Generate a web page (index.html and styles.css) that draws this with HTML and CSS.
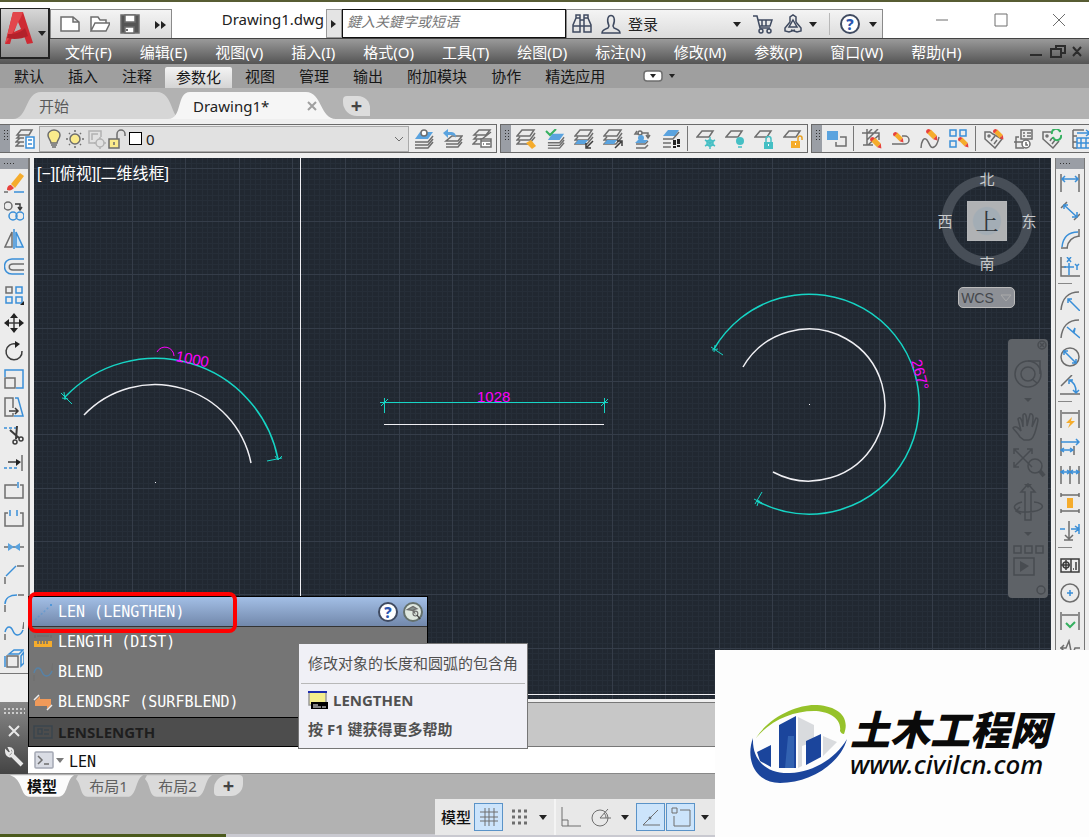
FILE: index.html
```html
<!DOCTYPE html>
<html lang="zh-CN">

<head>
    <title>Drawing1.dwg</title>
    <meta charset="utf-8">
    <link rel="stylesheet" href="styles.css">
</head>

<body>
    <!-- icon set, all on a 20x20 box -->
    <svg class="icon_defs" width="0" height="0">
        <symbol id="sheets" viewBox="0 0 20 20">
            <path d="M6 1h12l-4 6H1z M4 8l-3 3h13l5-7 M4 12l-3 3h12l6-7" />
        </symbol>
        <symbol id="stack" viewBox="0 0 20 20">
            <path class="fb" d="M6 3h13l-5 7H1z" />
            <path d="M1 13h13l5-6 M1 16h13l5-6 M1 19h13l5-6" />
        </symbol>
        <symbol id="sheet" viewBox="0 0 20 20">
            <path d="M6 2h11l-4 6H1z" />
        </symbol>
        <symbol id="pencil" viewBox="0 0 20 20">
            <path class="fy" d="M2 7l6-6 10 10-6 6z" />
            <path class="fr" d="M0 5c0-3 2-5 5-5l3 2-6 6z" />
            <path class="fr" d="M12 17l6-6 1 8z" />
        </symbol>
        <symbol id="layerprops" viewBox="0 0 20 20">
            <path d="M6 1h11l-3 5H2z M9 9H2l3-3 M9 13H1l4-4 M9 17H1l4-4" />
            <path class="w b" d="M11 8h8v11h-8z" />
            <path class="b" d="M13 11h4M13 15h4" />
        </symbol>
        <symbol id="bulb" viewBox="0 0 20 20">
            <path class="ly" d="M7 14c0-3-3-4-3-8a6 5 0 0 1 12 0c0 4-3 5-3 8z" />
            <path d="M7 16h6M8 18h4" />
        </symbol>
        <symbol id="sun" viewBox="0 0 20 20">
            <circle class="ly" cx="10" cy="10" r="5" />
            <path d="M10 1v2M10 17v2M1 10h2M17 10h2M4 4l1 1M15 15l1 1M16 4l-1 1M5 15l-1 1" />
        </symbol>
        <symbol id="vpfreeze" viewBox="0 0 20 20">
            <g class="faint">
                <path d="M9 14H3V2h12v6 M6 11V5h6" />
                <circle cx="14" cy="14" r="4" />
                <path d="M14 8v2M14 18v2M8 14h2M18 14h2" />
            </g>
        </symbol>
        <symbol id="unlock" viewBox="0 0 20 20">
            <path class="ly" d="M2 10h10v9H2z" />
            <path d="M10 10V5a4 4 0 0 1 8 0v2 M7 13v3" />
        </symbol>
        <symbol id="layercur" viewBox="0 0 20 20">
            <use href="#stack" />
            <circle class="w" cx="10" cy="4" r="3" />
        </symbol>
        <symbol id="layerprev" viewBox="0 0 20 20">
            <path d="M9 7h10l-4 5H3z M3 15h12l4-5 M3 18h12l4-5" />
            <path class="fb" d="M0 4l5-4v3c5 0 8 0 8 6-1-3-3-3-8-3v3z" />
        </symbol>
        <symbol id="layerstate" viewBox="0 0 20 20">
            <path d="M7 1h11l-4 5H2z M5 7l-3 3h8l9-7 M5 11l-4 4h7" />
            <path class="w" d="M9 10h10v8H9z" />
            <path d="M9 12h10M11 15h1M14 15h4" />
        </symbol>
        <symbol id="layermatch" viewBox="0 0 20 20">
            <use href="#sheets" />
            <path class="fy" d="M10 14l5-3 5 6-4 3z" />
        </symbol>
        <symbol id="layercheck" viewBox="0 0 20 20">
            <g transform="translate(2 2)"><use href="#stack" width="18" height="18" /></g>
            <path class="gr" d="M1 2l4 4 6-6" />
        </symbol>
        <symbol id="layeriso" viewBox="0 0 20 20">
            <use href="#sheets" />
            <path class="fb" d="M4 11h10l-3 4H1z" />
            <path class="dk" d="M19 12l-6 6M12 14v5h5" />
        </symbol>
        <symbol id="layeruniso" viewBox="0 0 20 20">
            <use href="#sheets" />
            <path class="fb" d="M4 11h10l-3 4H1z" />
            <path class="dk" d="M12 19l6-6M14 12h5v5" />
        </symbol>
        <symbol id="layermove" viewBox="0 0 20 20">
            <circle cx="8" cy="4" r="2" />
            <path d="M5 2L3 5h4M10 4h6v4M14 6l2 3 2-3M4 15h9l3-3M4 19h9l3-3" />
            <path class="fb" d="M3 14l3-3h10l-3 3z" />
            <circle class="fb" cx="9" cy="9" r="3" />
        </symbol>
        <symbol id="layerwalk" viewBox="0 0 20 20">
            <path class="fb" d="M7 1h11l-4 6H2z" />
            <path d="M2 10h10l6-7M2 14h8M2 18h8" />
            <path class="fk" d="M12 11h3v5h-3zM16 10h3v5h-3zM12 17h3v2h-3zM16 16h3v2h-3z" />
        </symbol>
        <symbol id="layfrz" viewBox="0 0 20 20">
            <use href="#sheet" />
            <path class="t" d="M14 8v12M9 11l10 6M19 11L9 17" />
            <circle class="t" cx="14" cy="14" r="3" />
        </symbol>
        <symbol id="layoff" viewBox="0 0 20 20">
            <use href="#sheet" />
            <circle class="ft" cx="15" cy="12" r="4" />
            <path class="t" d="M13 18h4" />
        </symbol>
        <symbol id="laylock" viewBox="0 0 20 20">
            <use href="#sheet" />
            <path class="ft" d="M10 13h9v7h-9z" />
            <path class="t" d="M12 13v-3a2 2 0 0 1 5 0v3" />
            <path class="fw" d="M14 15h1v2h-1z" />
        </symbol>
        <symbol id="layunlock" viewBox="0 0 20 20">
            <use href="#sheet" />
            <path class="fy" d="M8 12h9v7H8z" />
            <path class="y" d="M15 12V9a2 2 0 0 1 4 0v2" />
            <path class="fw" d="M12 14h1v2h-1z" />
        </symbol>
        <symbol id="draworder" viewBox="0 0 20 20">
            <path class="fb" d="M0 2h11v9H0z" />
            <path d="M13 8h6v9H9v-4" />
        </symbol>
        <symbol id="edithatch" viewBox="0 0 20 20">
            <path d="M5 0v16H1M0 4h17v7M1 16h10M16 0L5 11M17 6L6 16M10 0L5 5" />
            <g transform="translate(8 8)"><use href="#pencil" width="12" height="12" /></g>
        </symbol>
        <symbol id="editpline" viewBox="0 0 20 20">
            <path d="M1 15h13a4 4 0 0 0 0-8h-3" />
            <g transform="translate(2 3)"><use href="#pencil" width="11" height="11" /></g>
        </symbol>
        <symbol id="editspline" viewBox="0 0 20 20">
            <path d="M1 19c0-6 3-12 6-8s3 9 7 7 4-7 5-10" />
            <g transform="translate(6 0)"><use href="#pencil" width="12" height="12" /></g>
        </symbol>
        <symbol id="editarray" viewBox="0 0 20 20">
            <path class="b" d="M1 1h6v6H1zM11 1h6v6h-6zM1 12h6v6H1zM11 12h4" />
            <g transform="translate(9 8)"><use href="#pencil" width="11" height="11" /></g>
        </symbol>
        <symbol id="editattr" viewBox="0 0 20 20">
            <path d="M1 3h5l3 2 9 5-7 9L1 10z" />
            <circle cx="5" cy="7" r="1" />
            <path d="M7 12l4-5M10 15l3-4" />
            <g transform="translate(9 0)"><use href="#pencil" width="11" height="11" /></g>
        </symbol>
        <symbol id="battman" viewBox="0 0 20 20">
            <path d="M8 1h11v9H8zM10 4h2M14 4h4M10 7h2M14 7h4M6 8H3v11h8M1 13h10" />
            <circle class="w" cx="13" cy="15" r="4" />
            <path d="M13 13v3h2" />
        </symbol>
        <symbol id="attsync" viewBox="0 0 20 20">
            <path d="M9 3H1v7l10 9 6-7" />
            <circle cx="5" cy="7" r="1" />
            <path d="M8 12l2-3M10 15l3-4" />
            <path class="gr" d="M10 5a4 4 0 0 1 8-2V1M19 6a4 4 0 0 1-8 2v2" />
        </symbol>
        <symbol id="dataext" viewBox="0 0 20 20">
            <path d="M2 1h11M2 1v18M2 7h4M2 13h4M2 19h4" />
            <path class="b" d="M6 4h12M15 1l4 3-4 3M6 9h13v10H6zM6 14h13M10 9v10M15 9v10" />
        </symbol>

        <!-- modify toolbar -->
        <symbol id="erase" viewBox="0 0 20 20">
            <path class="fy" d="M7 11l9-11 4 3-9 12z" />
            <path class="fr" d="M3 17c0-4 2-5 4-5l3 3c-2 2-4 3-7 2z" />
            <path d="M0 19h4" />
            <path class="b" d="M10 19h10" />
        </symbol>
        <symbol id="copy" viewBox="0 0 20 20">
            <circle cx="4" cy="5" r="4" />
            <circle class="b" cx="9" cy="15" r="4" />
            <circle class="b" cx="16" cy="15" r="4" />
            <path class="dk" d="M11 3h5v5M14 6l2 3 2-3" />
        </symbol>
        <symbol id="mirror" viewBox="0 0 20 20">
            <path d="M8 3v15H1z" />
            <path class="lb" d="M12 3v15h7z" />
            <path class="b" d="M10 0v20" />
        </symbol>
        <symbol id="offset" viewBox="0 0 20 20">
            <path class="b" d="M20 2H8C-2 2-2 17 8 17h12" />
            <path d="M20 7H9c-5 0-5 6 0 6h11" />
        </symbol>
        <symbol id="array" viewBox="0 0 20 20">
            <path d="M2 2h6v6H2z" />
            <path class="b" d="M12 2h6v6h-6zM2 12h6v6H2zM12 12h6v6h-6z" />
            <path class="fk" d="M20 16v4h-4z" />
        </symbol>
        <symbol id="move" viewBox="0 0 20 20">
            <path class="dk" d="M10 3v14M3 10h14" />
            <path class="fk" d="M10 0l4 5H6zM10 20l-4-5h8zM0 10l5-4v8zM20 10l-5-4v8z" />
        </symbol>
        <symbol id="rotate" viewBox="0 0 20 20">
            <path class="dk" d="M12 3a8 8 0 1 0 6 7" />
            <path class="fk" d="M11 0l5 3-5 4z" />
        </symbol>
        <symbol id="scale" viewBox="0 0 20 20">
            <path class="b" d="M1 8V1h18v18h-7" />
            <path d="M1 9h10v10H1z" />
        </symbol>
        <symbol id="stretch" viewBox="0 0 20 20">
            <path d="M9 11V1H1v18h8v-3" />
            <path class="b" d="M11 1h3l5 18h-9" />
            <path class="dk" d="M5 14h9M11 11l3 3-3 3" />
        </symbol>
        <symbol id="trim" viewBox="0 0 20 20">
            <path class="b" d="M0 3h3M5 3h3M10 3h3" />
            <path class="dk" stroke-width="2" d="M13 1L12 14M6 5l9 8" />
            <circle class="dk" cx="11" cy="17" r="2" />
            <circle class="dk" cx="17" cy="14" r="2" />
        </symbol>
        <symbol id="extend" viewBox="0 0 20 20">
            <path d="M18 2v16" />
            <path class="b" d="M0 15h3M5 15h3M10 15h3" />
            <path class="dk" d="M4 9h10" />
            <path class="fk" d="M12 6l5 3-5 4z" />
        </symbol>
        <symbol id="breakpt" viewBox="0 0 20 20">
            <path d="M13 4H1v13h18V4h-3" />
            <path class="b" d="M14 1v6" />
        </symbol>
        <symbol id="break" viewBox="0 0 20 20">
            <path d="M4 4H1v13h18V4h-3" />
            <path class="b" d="M6 1v6M13 1v6" />
        </symbol>
        <symbol id="join" viewBox="0 0 20 20">
            <path d="M0 10h20" />
            <path class="fb" d="M4 6l6 4-6 4zM16 6l-6 4 6 4z" />
        </symbol>
        <symbol id="chamfer" viewBox="0 0 20 20">
            <path d="M1 12v7M13 1h7" />
            <path class="b" d="M2 11L12 1" />
        </symbol>
        <symbol id="fillet" viewBox="0 0 20 20">
            <path d="M1 12v7M14 2h6" />
            <path class="b" d="M1 11c0-6 5-9 12-9" />
        </symbol>
        <symbol id="blend" viewBox="0 0 20 20">
            <path d="M1 13v6M20 1l-1 7" />
            <path class="b" d="M1 11c2-7 6-6 8-1s7 6 10-1" />
        </symbol>
        <symbol id="explode" viewBox="0 0 20 20">
            <path d="M3 7h11v11H3z" />
            <path class="b" d="M5 5l5-4h9l-4 4zM17 7l3-4v11l-3 3zM1 7v11" />
        </symbol>

        <!-- dimension toolbar -->
        <symbol id="dimlin" viewBox="0 0 20 20">
            <path d="M1 1v18M19 1v18" />
            <path class="b" d="M2 6h16M5 3L2 6l3 3M15 3l3 3-3 3" />
        </symbol>
        <symbol id="dimali" viewBox="0 0 20 20">
            <path d="M1 7l6-6M14 19l6-6" />
            <path class="b" d="M4 4l13 12M4 8V4h4M12 16h5v-5" />
        </symbol>
        <symbol id="dimarc" viewBox="0 0 20 20">
            <path d="M7 19C8 11 12 8 19 7M1 19h7M19 0v8" />
            <path class="b" d="M2 18C3 8 9 3 18 3" />
        </symbol>
        <symbol id="dimord" viewBox="0 0 20 20">
            <path d="M1 0v19h19M1 10h5" />
            <path class="b" d="M4 10h10M9 6v12M7 0l4 5M11 0L7 5M15 7l2 2 2-2M17 9v4" />
        </symbol>
        <symbol id="dimrad" viewBox="0 0 20 20">
            <path d="M1 19C2 8 8 1 19 1" />
            <path class="b" d="M20 20L8 8M8 12V8h4" />
        </symbol>
        <symbol id="dimjog" viewBox="0 0 20 20">
            <path d="M1 19C2 8 8 1 19 1" />
            <path class="b" d="M20 19l-6-5 1-5-2 4-6-5" />
        </symbol>
        <symbol id="dimdia" viewBox="0 0 20 20">
            <circle cx="10" cy="10" r="9" />
            <path class="b" d="M4 4l12 12M4 8V4h4M12 16h4v-4" />
        </symbol>
        <symbol id="dimang" viewBox="0 0 20 20">
            <path d="M12 0L1 11M0 19h20" />
            <path class="b" d="M9 5c5 2 7 6 7 12M9 9V5h4M13 15l3 3 3-3" />
        </symbol>
        <symbol id="qdim" viewBox="0 0 20 20">
            <path d="M1 1v18M19 1v18M2 4h16" />
            <path class="fy" d="M12 8l-6 6h4l-2 5 7-7h-4z" />
        </symbol>
        <symbol id="dimbase" viewBox="0 0 20 20">
            <path d="M1 1v18M14 9v9" />
            <path class="b" d="M1 5h18M16 2l3 3-3 3M1 13h12M4 11l-3 2 3 2M10 11l3 2-3 2" />
        </symbol>
        <symbol id="dimcont" viewBox="0 0 20 20">
            <path d="M1 1v18M10 1v18M19 1v18" />
            <path class="b" d="M1 7h18M4 5L1 7l3 2M7 5l3 2-3 2M13 5l-3 2 3 2M16 5l3 2-3 2" />
        </symbol>
        <symbol id="dimspace" viewBox="0 0 20 20">
            <path d="M1 2h18M1 18h18M1 0v4M19 0v4M1 16v4M19 16v4" />
            <path class="fy" d="M7 5h6v10H7z" />
        </symbol>
        <symbol id="dimbreak" viewBox="0 0 20 20">
            <path d="M9 0v18M5 14l4 4 4-4M4 19h9" />
            <path class="b" d="M0 8h5M11 8h8M15 5l4 3-4 3M19 3v10" />
        </symbol>
        <symbol id="tol" viewBox="0 0 20 20">
            <path class="dk" d="M1 4h18v13H1zM11 4v13M6 5v10M1 10h9M16 7v8M13 14h1" />
            <circle class="dk" cx="6" cy="10" r="3" />
        </symbol>
        <symbol id="center" viewBox="0 0 20 20">
            <circle cx="10" cy="10" r="9" />
            <path class="b" d="M10 7v6M7 10h6" />
        </symbol>
        <symbol id="diminsp" viewBox="0 0 20 20">
            <path d="M1 1v18M19 1v18M2 4h16" />
            <path class="gr" d="M6 12l4 4 5-5" />
        </symbol>
        <symbol id="jogline" viewBox="0 0 20 20">
            <path d="M0 9h6l3-7 3 15 3-8h5M4 6L1 9l3 3" />
        </symbol>
        <symbol id="caret" viewBox="0 0 8 8">
            <path class="fk" d="M0 2h8L4 7z" />
        </symbol>
    </svg>

    <header class="app_header">
        <div class="title_bar">
            <div class="quick_access">
                <button type="button" aria-label="新建"><svg viewBox="0 0 20 20"><path class="w" d="M1 3h12l6 5v9H1z M13 3v5h6" /></svg></button>
                <button type="button" aria-label="打开"><svg viewBox="0 0 20 20"><path class="w" d="M1 17V3h7l2 3h6v3 M1 17l4-8h15l-4 8z" /></svg></button>
                <button type="button" aria-label="保存"><svg viewBox="0 0 20 20"><path fill="#555" d="M1 1h18v18H1z" /><path class="w" d="M5 1h10v7H5zM5 13h9v6H5z" /><path class="dk" d="M7 15v2" /></svg></button>
                <button type="button" aria-label="更多"><svg viewBox="0 0 20 20"><path class="fk" d="M5 7l5 4-5 4zM11 7l5 4-5 4z" /></svg></button>
            </div>
            <div class="doc_title">Drawing1.dwg</div>
            <button class="search_toggle" type="button" aria-label="展开"><svg viewBox="0 0 8 8"><path class="fk" d="M1 0l5 4-5 4z" /></svg></button>
            <input class="search_box" type="text" placeholder="鍵入关鍵字或短语" aria-label="搜索">
            <div class="info_center">
                <button class="binoculars" type="button" aria-label="查找">
                    <svg class="navy" viewBox="0 0 20 20"><path d="M1 18v-7l3-7V1h4v17zM12 18V1h4v3l3 7v7zM8 6h4v6H8zM1 12h7M12 12h7M4 4h4M12 4h4" /></svg>
                </button>
                <button class="login" type="button">
                    <svg class="navy" viewBox="0 0 20 20"><path d="M1 19c0-3 3-4 6-5l1-2c-6-14 10-14 4 0l1 2c3 1 6 2 6 5z" /></svg>
                    登录
                </button>
                <svg class="caret"><use href="#caret" /></svg>
                <button class="cart" type="button" aria-label="购物车">
                    <svg class="navy" viewBox="0 0 20 20"><path d="M0 2h4l3 12h10M5 6h14l-2 6H7M9 6v6M13 6v6" /><circle cx="8" cy="17" r="2" /><circle cx="16" cy="17" r="2" /></svg>
                </button>
                <button type="button" aria-label="应用">
                    <svg class="navy" viewBox="0 0 20 20"><path d="M10 6l4 7H6zM7 8V3l3-2 3 2v5M7 8l-5 6v3l4 1 6-2M13 8l5 6v3l-4 1-6-2" /></svg>
                </button>
                <svg class="caret near"><use href="#caret" /></svg>
                <span class="divider"></span>
                <button class="help" type="button" aria-label="帮助">?</button>
                <svg class="caret"><use href="#caret" /></svg>
            </div>
            <div class="window_buttons">
                <button type="button" aria-label="最小化"><svg viewBox="0 0 14 14"><path d="M1 7h12" /></svg></button>
                <button type="button" aria-label="最大化"><svg viewBox="0 0 14 14"><path d="M1 1h12v12H1z" /></svg></button>
                <button type="button" aria-label="关闭"><svg viewBox="0 0 14 14"><path d="M1 1l12 12M13 1L1 13" /></svg></button>
            </div>
        </div>
        <nav class="menu_bar">
            <a href="#">文件(F)</a>
            <a href="#">编辑(E)</a>
            <a href="#">视图(V)</a>
            <a href="#">插入(I)</a>
            <a href="#">格式(O)</a>
            <a href="#">工具(T)</a>
            <a href="#">绘图(D)</a>
            <a href="#">标注(N)</a>
            <a href="#">修改(M)</a>
            <a href="#">参数(P)</a>
            <a href="#">窗口(W)</a>
            <a href="#">帮助(H)</a>
            <svg class="mdi_buttons" viewBox="0 0 54 16"><path d="M1 11h12M27 4V2h9v7h-3M22 5h10v8H22zM44 3l8 9M52 3l-8 9" /></svg>
        </nav>
        <button class="app_button" type="button" aria-label="应用程序菜单">
            <svg class="app_logo" viewBox="0 0 32 36">
                <path fill="#cf2a33" d="M2 34L10 2h10l10 31-6 1-4-11c-4 3-8 4-11 4l-2 7z" />
                <path fill="#e2474c" d="M10 2h10l-2 5L8 26l-6 8z" />
                <path fill="#b3222b" d="M5 24c8 0 13-2 17-6l3 8c-6 3-14 4-21 2z" />
                <path fill="#b8b8b8" d="M15 12l3 7-7 3z" />
            </svg>
            <svg class="caret"><use href="#caret" /></svg>
        </button>
    </header>

    <nav class="ribbon_tabs">
        <a href="#">默认</a>
        <a href="#">插入</a>
        <a href="#">注释</a>
        <a class="active" href="#">参数化</a>
        <a href="#">视图</a>
        <a href="#">管理</a>
        <a href="#">输出</a>
        <a href="#">附加模块</a>
        <a href="#">协作</a>
        <a href="#">精选应用</a>
        <button type="button" aria-label="最小化功能区">
            <svg viewBox="0 0 34 12"><rect class="w" x="1" y="1" width="18" height="10" rx="3" /><path class="fk" d="M7 4h6l-3 4zM26 4h6l-3 4z" /></svg>
        </button>
    </nav>

    <div class="file_tabs">
        <button class="file_tab start" type="button">
            <svg viewBox="0 0 168 27"><path fill="#d6d6d6" d="M0 27C15 27 12 0 28 0H144C160 0 158 27 168 27z" /></svg>
            <span>开始</span>
        </button>
        <button class="file_tab current" type="button">
            <svg viewBox="0 0 168 27"><path fill="#f6f6f6" d="M0 27C15 27 8 0 22 0H138C154 0 152 27 168 27z" /></svg>
            <span>Drawing1*</span>
            <svg class="tab_close" viewBox="0 0 10 10"><path d="M1 1l8 8M9 1L1 9" /></svg>
        </button>
        <button class="add_tab" type="button">+</button>
    </div>

    <div class="toolbars">
        <div class="toolbar">
            <span class="grip"></span>
            <button type="button" aria-label="图层特性"><svg><use href="#layerprops" /></svg></button>
            <button class="layer_combo" type="button">
                <svg><use href="#bulb" /></svg>
                <svg><use href="#sun" /></svg>
                <svg><use href="#vpfreeze" /></svg>
                <svg><use href="#unlock" /></svg>
                <span class="swatch"></span>
                <span>0</span>
                <svg class="chevron" viewBox="0 0 10 6"><path d="M1 1l4 4 4-4" /></svg>
            </button>
            <button type="button" aria-label="置为当前"><svg><use href="#layercur" /></svg></button>
            <button type="button" aria-label="上一个图层"><svg><use href="#layerprev" /></svg></button>
            <button type="button" aria-label="图层状态"><svg><use href="#layerstate" /></svg></button>
        </div>
        <div class="toolbar">
            <span class="grip"></span>
            <button type="button" aria-label="图层匹配"><svg><use href="#layermatch" /></svg></button>
            <button type="button" aria-label="更改为当前图层"><svg><use href="#layercheck" /></svg></button>
            <button type="button" aria-label="隔离"><svg><use href="#layeriso" /></svg></button>
            <button type="button" aria-label="取消隔离"><svg><use href="#layeruniso" /></svg></button>
            <button type="button" aria-label="复制到图层"><svg><use href="#layermove" /></svg></button>
            <button type="button" aria-label="图层漫游"><svg><use href="#layerwalk" /></svg></button>
            <span class="separator"></span>
            <button type="button" aria-label="冻结"><svg><use href="#layfrz" /></svg></button>
            <button type="button" aria-label="关闭图层"><svg><use href="#layoff" /></svg></button>
            <button type="button" aria-label="锁定"><svg><use href="#laylock" /></svg></button>
            <button type="button" aria-label="解锁"><svg><use href="#layunlock" /></svg></button>
        </div>
        <div class="toolbar last">
            <span class="grip"></span>
            <button type="button" aria-label="绘图次序"><svg><use href="#draworder" /></svg></button>
            <span class="separator"></span>
            <button type="button" aria-label="编辑图案填充"><svg><use href="#edithatch" /></svg></button>
            <button type="button" aria-label="编辑多段线"><svg><use href="#editpline" /></svg></button>
            <button type="button" aria-label="编辑样条曲线"><svg><use href="#editspline" /></svg></button>
            <button type="button" aria-label="编辑阵列"><svg><use href="#editarray" /></svg></button>
            <span class="separator"></span>
            <button type="button" aria-label="编辑属性"><svg><use href="#editattr" /></svg></button>
            <button type="button" aria-label="块属性管理器"><svg><use href="#battman" /></svg></button>
            <button type="button" aria-label="同步属性"><svg><use href="#attsync" /></svg></button>
            <button type="button" aria-label="数据提取"><svg><use href="#dataext" /></svg></button>
        </div>
    </div>

    <main class="workspace">
        <div class="side_bar">
            <span class="grip"></span>
            <button type="button" aria-label="删除"><svg><use href="#erase" /></svg></button>
            <button type="button" aria-label="复制"><svg><use href="#copy" /></svg></button>
            <button type="button" aria-label="镜像"><svg><use href="#mirror" /></svg></button>
            <button type="button" aria-label="偏移"><svg><use href="#offset" /></svg></button>
            <button type="button" aria-label="阵列"><svg><use href="#array" /></svg></button>
            <button type="button" aria-label="移动"><svg><use href="#move" /></svg></button>
            <button type="button" aria-label="旋转"><svg><use href="#rotate" /></svg></button>
            <button type="button" aria-label="缩放"><svg><use href="#scale" /></svg></button>
            <button type="button" aria-label="拉伸"><svg><use href="#stretch" /></svg></button>
            <button type="button" aria-label="修剪"><svg><use href="#trim" /></svg></button>
            <button type="button" aria-label="延伸"><svg><use href="#extend" /></svg></button>
            <button type="button" aria-label="打断于点"><svg><use href="#breakpt" /></svg></button>
            <button type="button" aria-label="打断"><svg><use href="#break" /></svg></button>
            <button type="button" aria-label="合并"><svg><use href="#join" /></svg></button>
            <button type="button" aria-label="倒角"><svg><use href="#chamfer" /></svg></button>
            <button type="button" aria-label="圆角"><svg><use href="#fillet" /></svg></button>
            <button type="button" aria-label="光顺曲线"><svg><use href="#blend" /></svg></button>
            <button type="button" aria-label="分解"><svg><use href="#explode" /></svg></button>
        </div>

        <div class="canvas">
            <svg class="drawing">
                <defs>
                    <pattern id="grid" x="45" y="10" width="160" height="160" patternUnits="userSpaceOnUse">
                        <path stroke="#262e38" d="M5.5 0v160M11.5 0v160M16.5 0v160M21.5 0v160M27.5 0v160M32.5 0v160M37.5 0v160M43.5 0v160M48.5 0v160M59.5 0v160M64.5 0v160M69.5 0v160M75.5 0v160M80.5 0v160M85.5 0v160M91.5 0v160M96.5 0v160M101.5 0v160M112.5 0v160M117.5 0v160M123.5 0v160M128.5 0v160M133.5 0v160M139.5 0v160M144.5 0v160M149.5 0v160M155.5 0v160" />
                        <path stroke="#262e38" d="M0 5.5h160M0 11.5h160M0 16.5h160M0 21.5h160M0 27.5h160M0 32.5h160M0 37.5h160M0 43.5h160M0 48.5h160M0 59.5h160M0 64.5h160M0 69.5h160M0 75.5h160M0 80.5h160M0 85.5h160M0 91.5h160M0 96.5h160M0 101.5h160M0 112.5h160M0 117.5h160M0 123.5h160M0 128.5h160M0 133.5h160M0 139.5h160M0 144.5h160M0 149.5h160M0 155.5h160" />
                        <path stroke="#353d49" d="M.5 0v160M53.5 0v160M106.5 0v160M0 .5h160M0 53.5h160M0 106.5h160" />
                    </pattern>
                </defs>
                <rect width="100%" height="100%" fill="url(#grid)" stroke="none" />

                <!-- viewport edges -->
                <path class="object" d="M266.5 0V536.5H1017" />

                <!-- arc length -->
                <path class="object curve" d="M50 257A98 98 0 0 1 217 305" />
                <path class="object" d="M121 324.5h1" />
                <path class="dim curve" d="M31 239A125 125 0 0 1 244 301" />
                <path class="dim" d="M27 235l11 11M28 240l6 1M30 234l1 8M233 303l15-3M241 298l3 4 4-4" />
                <path class="dim_mark" d="M123 194a9 9 0 0 1 17 4" />
                <text class="dim_text" transform="translate(141 203) rotate(11)">1000</text>

                <!-- linear -->
                <path class="object" d="M350 266.5h220" />
                <path class="dim" d="M346 244.5h228M350.5 240v15M570.5 240v15M347 248l7-7M567 248l7-7" />
                <text class="dim_text" x="443" y="244">1028</text>

                <!-- angle -->
                <path class="object curve" d="M709 209A76 76 0 1 1 739 314" />
                <path class="object" d="M775 246.5h1" />
                <path class="dim curve" d="M680 191A110 110 0 1 1 723 343" />
                <path class="dim" d="M677 189l12 8M678 192l6-1M681 187l-1 7M721 346l7-12M720 341l8 4M723 348l2-6" />
                <text class="dim_text" transform="translate(877 203) rotate(75)">267°</text>
            </svg>

            <div class="view_label">[−][俯视][二维线框]</div>

            <div class="view_cube">
                <span class="north">北</span>
                <span class="west">西</span>
                <button class="cube_top" type="button">上</button>
                <span class="east">东</span>
                <span class="south">南</span>
            </div>
            <button class="wcs" type="button">WCS <svg viewBox="0 0 12 8"><path d="M1 1h10L6 7z" /></svg></button>

            <div class="nav_bar">
                <svg viewBox="0 0 40 259">
                    <circle cx="34" cy="6" r="4" /><path d="M32 4l4 4M36 4l-4 4" />
                    <circle cx="20" cy="35" r="13" /><circle cx="20" cy="35" r="7" /><path d="M24 40l5 4M20 22h12v13" />
                    <path class="fn" d="M16 59h8l-4 4zM16 145h8l-4 4zM16 193h8l-4 4z" />
                    <path d="M12 98c-3-5-6-7-7-9 2-3 6 0 8 3L10 80c2-3 4 0 5 8V76c2-3 4-1 4 11l3-12c3-1 4 2 2 13l4-9c3 0 2 3 0 11s-4 11-7 11h-5z" />
                    <path d="M6 110l18 18M24 110L6 128M6 115v-5h5M19 110h5v5M6 123v5h5" />
                    <circle cx="27" cy="127" r="7" /><path d="M32 132l4 5" stroke-width="4" />
                    <path d="M17 181v-28h-4l7-8 7 8h-4v28zM14 163c-13 3-8 11 6 10 18-1 18-9 6-10M12 168l-4 4 5 3" />
                    <path d="M6 207h7v7H6zM17 207h7v7h-7zM28 207h7v7h-7zM6 219h20v17H6z" />
                    <path class="fn" d="M12 222l9 5-9 6z" />
                    <circle cx="33" cy="251" r="4" />
                </svg>
            </div>
        </div>

        <div class="side_bar right">
            <span class="grip"></span>
            <button type="button" aria-label="线性"><svg><use href="#dimlin" /></svg></button>
            <button type="button" aria-label="对齐"><svg><use href="#dimali" /></svg></button>
            <button type="button" aria-label="弧长"><svg><use href="#dimarc" /></svg></button>
            <button type="button" aria-label="坐标"><svg><use href="#dimord" /></svg></button>
            <span class="separator"></span>
            <button type="button" aria-label="半径"><svg><use href="#dimrad" /></svg></button>
            <button type="button" aria-label="折弯"><svg><use href="#dimjog" /></svg></button>
            <button type="button" aria-label="直径"><svg><use href="#dimdia" /></svg></button>
            <button type="button" aria-label="角度"><svg><use href="#dimang" /></svg></button>
            <span class="separator"></span>
            <button type="button" aria-label="快速标注"><svg><use href="#qdim" /></svg></button>
            <button type="button" aria-label="基线"><svg><use href="#dimbase" /></svg></button>
            <button type="button" aria-label="连续"><svg><use href="#dimcont" /></svg></button>
            <button type="button" aria-label="等距标注"><svg><use href="#dimspace" /></svg></button>
            <button type="button" aria-label="折断标注"><svg><use href="#dimbreak" /></svg></button>
            <span class="separator"></span>
            <button type="button" aria-label="公差"><svg><use href="#tol" /></svg></button>
            <button type="button" aria-label="圆心标记"><svg><use href="#center" /></svg></button>
            <button type="button" aria-label="检验"><svg><use href="#diminsp" /></svg></button>
            <button type="button" aria-label="折弯线性"><svg><use href="#jogline" /></svg></button>
        </div>
    </main>

    <section class="command_window">
        <div class="command_tools">
            <span class="dots"></span>
            <button type="button" aria-label="关闭"><svg viewBox="0 0 12 12"><path d="M1 1l10 10M11 1L1 11" /></svg></button>
            <button type="button" aria-label="自定义"><svg viewBox="0 0 20 20"><path d="M7 7l11 11" stroke-width="4" /><path d="M2 4c0 6 6 7 7 3s-1-6-4-6l2 4-2 2z" /></svg></button>
        </div>
        <div class="command_body">
            <div class="history"></div>
            <div class="command_line">
                <svg class="prompt" viewBox="0 0 20 18"><rect x="1" y="1" width="18" height="16" rx="1" fill="#d9dce4" stroke="#a4a8b4" /><path d="M4 5l4 4-4 4M10 13h5" /></svg>
                <svg class="caret"><use href="#caret" /></svg>
                <input type="text" value="LEN" aria-label="命令">
            </div>
        </div>

        <ul class="suggestions">
            <li class="selected">
                <svg><path class="b" stroke-dasharray="2 2" opacity=".4" d="M2 18L16 5" /><path class="b" d="M17 3h2" /></svg>
                LEN (LENGTHEN)
                <button class="help" type="button" aria-label="帮助">?</button>
                <button class="help web" type="button" aria-label="联机搜索"><svg viewBox="0 0 20 20"><path fill="#84908a" d="M3 7l7-4 5 3-4 1 1 4-3-3z" /><circle cx="13" cy="12" r="3" /><path class="dk" d="M15 14l4 5" /></svg></button>
            </li>
            <li><svg><path class="fy" d="M1 9h18v6H1z" /><path d="M2 3v3M18 3v3M4 4h12M5 9v3M8 9v3M11 9v3M14 9v3" /></svg>LENGTH (DIST)</li>
            <li><svg class="dim_icon"><use href="#blend" /></svg>BLEND</li>
            <li><svg><path fill="#f09a5a" stroke="none" d="M2 9l5-5v3h11v6l-4 4v-3H2z" /><path stroke="#eee" d="M1 8l5-5M14 18l5-5" /></svg>BLENDSRF (SURFBLEND)</li>
            <li class="sysvar"><svg><path d="M1 4h18v12H1zM5 7h4v5H5zM11 8h5M11 12h5" stroke="#3b454e" /></svg>LENSLENGTH</li>
        </ul>
        <div class="highlight"></div>

        <div class="tooltip">
            <p>修改对象的长度和圆弧的包含角</p>
            <div class="tooltip_more">
                <b><svg viewBox="0 0 20 18"><path fill="#f4ee8c" stroke="#999" d="M1 1h17v13H1z" /><path fill="#1d2cae" stroke="none" d="M0 0h19v2H0z" /><path fill="#000" stroke="none" d="M3 11h17v7H3z" /><path stroke="#fff" d="M5 14h5M5 16h8M14 16h4" stroke-width="1" /></svg>LENGTHEN</b>
                <b>按 F1 键获得更多帮助</b>
            </div>
        </div>
    </section>

    <footer class="bottom_bar">
        <div class="layout_tabs">
            <button class="layout_tab model" type="button">
                <svg viewBox="0 0 66 22"><path fill="#fbfbfb" d="M0 0H66C58 4 60 22 50 22H20C10 22 14 4 0 0z" /></svg><span>模型</span>
            </button>
            <button class="layout_tab" type="button">
                <svg viewBox="0 0 70 22"><path fill="#dadada" d="M4 0H70C62 4 64 22 54 22H14C6 22 8 10 2 4z" /></svg><span>布局1</span>
            </button>
            <button class="layout_tab" type="button">
                <svg viewBox="0 0 70 22"><path fill="#dadada" d="M4 0H70C62 4 64 22 54 22H14C6 22 8 10 2 4z" /></svg><span>布局2</span>
            </button>
            <button class="add_layout" type="button">+</button>
        </div>
        <div class="status_bar">
            <button class="space" type="button">模型</button>
            <button class="on" type="button" aria-label="栅格"><svg><path d="M6 1v18M10 1v18M15 1v18M1 5h18M1 10h18M1 14h18" /></svg></button>
            <button type="button" aria-label="捕捉"><svg class="snap"><path stroke-dasharray="3 3" d="M3 4h15M3 10h15M3 16h15" /></svg></button>
            <svg class="caret"><use href="#caret" /></svg>
            <span class="gap"></span>
            <button type="button" aria-label="正交"><svg><path d="M1 0v19h19M1 13h6v6" /></svg></button>
            <button type="button" aria-label="极轴"><svg><circle cx="9" cy="11" r="8" /><path d="M9 11h11M9 11l8-9M13 6a6 6 0 0 1 2 5" /></svg></button>
            <svg class="caret"><use href="#caret" /></svg>
            <button class="on" type="button" aria-label="对象追踪"><svg><path d="M17 3L2 18h17" /><circle fill="#40607c" cx="9" cy="11" r="1" /></svg></button>
            <button class="on" type="button" aria-label="对象捕捉"><svg><path d="M1 1h5v5H1zM9 3h10v16H3V9" /></svg></button>
            <svg class="caret"><use href="#caret" /></svg>
        </div>
    </footer>

    <div class="site_mark">
        <svg viewBox="0 0 100 80">
            <path fill="#96c22a" d="M8 34C22 12 50 1 66 1C88 1 103 12 96 30C94 30 93 29 92 27C94 14 80 7 66 7C44 7 22 17 8 34z" />
            <path fill="#d9dbde" d="M50 13l16 8v17l-12 4v20l-4 2zM75 32l14 6-14 14z" />
            <path fill="#1b459c" d="M9 48l14-7v22l-11-6zM31 21l17-9v52H31zM58 37l15-7v23l-15 8z" />
            <path fill="#4a7fc6" d="M40 32h6v32h-9z" opacity=".5" />
            <path fill="#1b459c" d="M5 34C-2 52 4 78 32 79C62 79 92 60 99 35C88 54 66 68 42 69C18 70 4 56 5 34z" />
        </svg>
        <div>
            <strong>土木工程网</strong>
            <em>www.civilcn.com</em>
        </div>
    </div>
</body>

</html>
```

FILE: styles.css
```css
:root {
    --icon: #6e6e6e;
    --blue: #3a8fd8;
    --panel: #ececec;
    --line: #6a6a6a;
    --ui: "Noto Sans", "Noto Sans CJK SC", sans-serif;
    --mono: "DejaVu Sans Mono", monospace;
}

* {
    box-sizing: border-box;
}

body {
    margin: 0;
    height: 100vh;
    display: flex;
    flex-direction: column;
    position: relative;
    overflow: hidden;
    background: #efefef;
    color: #222;
    font-family: var(--ui);
    font-size: 15px;
    line-height: 20px;
}

button {
    border: 0;
    padding: 0;
    background: none;
    color: inherit;
    font: inherit;
}

a {
    color: inherit;
    text-decoration: none;
}

/* icons */

svg {
    width: 20px;
    height: 20px;
    flex: none;
    display: block;
    fill: none;
    stroke: var(--icon);
    stroke-width: 1.5;
}

.icon_defs {
    position: absolute;
    width: 0;
    height: 0;
}

.w { fill: #fff; }
.fw { fill: #fff; stroke: none; }
.b { stroke: var(--blue); }
.t { stroke: #45bfc4; }
.y { stroke: #e8a020; }
.gr { stroke: #35b060; stroke-width: 2; }
.dk { stroke: #3c3c3c; }
.lb { fill: #cfe6f8; stroke: var(--blue); }
.ly { fill: #fbeb8c; }
.fb { fill: #5aa3df; stroke: none; }
.fy { fill: #f5ac2c; stroke: none; }
.fr { fill: #e8423c; stroke: none; }
.ft { fill: #45bfc4; stroke: none; }
.fk { fill: #222; stroke: none; }
.faint { opacity: .4; }

.caret {
    width: 8px;
    height: 8px;
}

.navy {
    stroke: #3f4a60;
}

/* title and menus */

.app_header {
    position: relative;
    border-top: 2px solid #575c33;
    background: #fff;
}

.title_bar {
    display: flex;
    height: 36px;
    padding: 7px 0 0 50px;
}

.quick_access,
.info_center {
    display: flex;
    align-items: center;
    border: 1px solid #8a8a8a;
    border-bottom: 0;
    background: linear-gradient(#f4f4f4, #dcdcdc);
}

.quick_access {
    width: 122px;
    padding-left: 9px;
    gap: 10px;
}

.doc_title {
    width: 154px;
    padding-right: 2px;
    text-align: right;
    color: #222;
}

.search_toggle {
    width: 16px;
    display: flex;
    align-items: center;
    justify-content: center;
    border: 1px solid #999;
    background: #e4e4e4;
}

.search_toggle svg {
    width: 8px;
    height: 8px;
}

.search_box {
    flex: 1;
    min-width: 100px;
    padding: 0 4px 4px;
    border: 1px solid #111;
    background: #fff;
    font: italic 14px var(--ui);
}

.search_box::placeholder {
    color: #777;
}

.info_center {
    width: 317px;
    padding: 0 5px;
}

.login {
    display: flex;
    align-items: center;
    gap: 7px;
    margin: 0 auto 0 9px;
}

.cart {
    margin: 0 10px 0 12px;
}

.caret.near {
    margin-left: 6px;
}

.divider {
    align-self: stretch;
    margin: 3px 10px 3px 12px;
    border-left: 1px solid #b8b8b8;
}

.help {
    width: 20px;
    height: 20px;
    border: 2px solid #3f4a60;
    border-radius: 50%;
    background: #fff;
    color: #2b55b0;
    font-size: 15px;
    font-weight: 800;
    line-height: 16px;
    text-align: center;
}

.info_center .help {
    margin-right: 9px;
}

.window_buttons {
    display: flex;
    width: 206px;
    justify-content: space-between;
    padding: 4px 23px 0 52px;
}

.window_buttons svg {
    width: 14px;
    height: 14px;
    stroke-width: 1;
}

.window_buttons button {
    align-self: flex-start;
}

.menu_bar {
    display: flex;
    align-items: center;
    gap: 28px;
    height: 26px;
    padding: 0 6px 0 65px;
    border-top: 1px solid #444;
    background: linear-gradient(#9a9a9a, #545454);
    color: #fff;
    white-space: nowrap;
}

.mdi_buttons {
    width: 54px;
    height: 16px;
    margin-left: auto;
    stroke: #2c2c2c;
    stroke-width: 2;
}

.app_button {
    position: absolute;
    left: 0;
    top: 6px;
    width: 50px;
    height: 51px;
    display: flex;
    align-items: center;
    border: 1px solid #222;
    border-width: 1px 2px 2px 1px;
    background: linear-gradient(#d8d8d8, #8e8e8e);
}

.app_logo {
    width: 32px;
    height: 36px;
    margin: 0 3px 10px 2px;
    stroke: none;
}

/* tabs */

.ribbon_tabs {
    display: flex;
    align-items: center;
    gap: 24px;
    height: 24px;
    padding-left: 14px;
    background: #9f9f9f;
    color: #161616;
    white-space: nowrap;
}

.ribbon_tabs .active {
    align-self: flex-end;
    margin: 0 -11px;
    padding: 0 11px 1px;
    border-radius: 2px 2px 0 0;
    background: linear-gradient(#f4f4f4, #d4d4d4);
}

.ribbon_tabs button {
    margin-left: 14px;
}

.ribbon_tabs button svg {
    width: 34px;
    height: 12px;
}

.file_tabs {
    display: flex;
    align-items: flex-end;
    height: 31px;
    padding-left: 13px;
    background: #b2b2b2;
}

.file_tab {
    position: relative;
    display: flex;
    align-items: center;
    justify-content: space-between;
    width: 168px;
    height: 27px;
    padding: 0 26px;
    color: #5a5a5a;
}

.file_tab svg:first-child {
    position: absolute;
    inset: 0;
    width: 100%;
    height: 100%;
    stroke: none;
}

.file_tab span {
    position: relative;
}

.file_tab.current {
    width: 170px;
    margin-left: -14px;
    padding: 0 20px 0 26px;
    color: #222;
}

.tab_close {
    position: relative;
    width: 10px;
    height: 10px;
    stroke: #a0a0a0;
    stroke-width: 2;
}

.add_tab,
.add_layout {
    background: #dcdcdc;
    color: #444;
    font-size: 20px;
    font-weight: 700;
    line-height: 18px;
}

.add_tab {
    width: 27px;
    height: 20px;
    margin: 0 0 3px 6px;
    border-radius: 4px 12px 0 14px;
}

/* tool rows */

.toolbars {
    display: flex;
    gap: 3px;
    height: 39px;
    padding: 5px 0;
    overflow: hidden;
}

.toolbar {
    flex: none;
    display: flex;
    align-items: center;
    border: 1px solid var(--line);
    background: var(--panel);
}

.toolbar:first-child {
    flex: 1;
    min-width: 300px;
    border-left: 0;
}

.toolbar.last {
    width: 278px;
    border-right: 0;
}

.toolbar > button {
    display: flex;
    justify-content: center;
    width: 29px;
    flex: none;
}

.grip {
    flex: none;
    background: radial-gradient(circle, #333 1px, transparent 1px) 1px 4px / 3px 3px content-box, #9a9ea5;
}

.toolbar .grip {
    width: 10px;
    height: 100%;
    padding: 3px 2px 10px;
}

.separator {
    flex: none;
}

.toolbar .separator {
    width: 1px;
    height: 25px;
    margin: 0 3px 0 2px;
    background: #777;
}

.toolbar .layer_combo {
    flex: 1;
    display: flex;
    justify-content: flex-start;
    align-items: center;
    gap: 1px;
    height: 26px;
    padding: 0 4px;
    border: 1px solid #aaa;
    background: #e1e1e1;
}

.swatch {
    width: 13px;
    height: 13px;
    margin: 0 3px 0 1px;
    border: 1px solid #000;
    background: #fff;
}

.chevron {
    width: 10px;
    height: 6px;
    margin-left: auto;
    stroke-width: 1;
}

/* drawing area */

.workspace {
    flex: 1;
    min-height: 0;
    display: flex;
    gap: 4px;
    padding-bottom: 3px;
}

.side_bar {
    align-self: flex-start;
    width: 30px;
    max-height: 100%;
    display: flex;
    flex-direction: column;
    overflow: hidden;
    border-right: 2px solid #777;
    border-bottom: 1px solid #777;
    background: var(--panel);
}

.side_bar.right {
    margin-right: 4px;
    border-width: 0 1px;
    border-style: solid;
    border-color: #777;
}

.side_bar .grip {
    height: 11px;
    padding: 3px 12px 3px 2px;
}

.side_bar button {
    flex: none;
    display: flex;
    align-items: center;
    height: 28px;
    padding-left: 4px;
}

.side_bar .separator {
    width: 14px;
    height: 1px;
    margin: 2px 0 3px 2px;
    background: #888;
}

.canvas {
    position: relative;
    flex: 1;
    min-width: 0;
    overflow: hidden;
    background: #212831;
}

.drawing {
    position: absolute;
    inset: 0;
    width: 100%;
    height: 100%;
    stroke-width: 1;
}

.object {
    stroke: #f0f0f4;
}

.dim {
    stroke: #16d5c5;
}

.curve {
    stroke-width: 1.5;
}

.dim_mark {
    stroke: #f0f;
}

.dim_text {
    fill: #f0f;
    stroke: none;
    font: 15px "Liberation Sans", sans-serif;
}

.view_label {
    position: relative;
    padding: 6px 3px;
    color: #fff;
    font-family: "Liberation Sans", "Noto Sans CJK SC", sans-serif;
    font-size: 16px;
}

/* compass ring, labels sit on its four sides */
.view_cube {
    position: absolute;
    top: 13px;
    right: 14px;
    width: 100px;
    height: 100px;
    display: grid;
    grid-template: 16px 1fr 16px / 16px 1fr 16px;
    place-items: center;
    background: radial-gradient(circle closest-side, transparent 35px, #474e57 36px 45px, transparent 46px);
    color: #c8cacc;
    line-height: 16px;
}

.north { grid-area: 1 / 2; }
.west { grid-area: 2 / 1; }
.cube_top { grid-area: 2 / 2; }
.east { grid-area: 2 / 3; }
.south { grid-area: 3 / 2; }

.cube_top {
    width: 40px;
    height: 40px;
    border: 1px solid #b4b6b8;
    background: radial-gradient(#a3adb5 50%, #b0b2b4 55%);
    color: #30363c;
    font-family: "Noto Serif CJK SC", "Noto Sans CJK SC", sans-serif;
    font-size: 23px;
    line-height: 34px;
}

.wcs {
    position: absolute;
    top: 129px;
    right: 36px;
    width: 57px;
    height: 21px;
    display: flex;
    align-items: center;
    justify-content: center;
    gap: 6px;
    border: 1px solid #bbb;
    border-radius: 5px;
    background: #8d9096;
    color: #44474c;
    font: 14px "Liberation Sans", sans-serif;
}

.wcs svg {
    width: 12px;
    height: 8px;
    stroke: #aaa;
    stroke-width: 1;
}

.nav_bar {
    position: absolute;
    top: 181px;
    right: 3px;
    border-radius: 4px;
    background: #5e6267;
}

.nav_bar svg {
    width: 40px;
    height: 259px;
    stroke: #484c51;
}

.fn {
    fill: #484c51;
    stroke: none;
}

/* command window */

.command_window {
    position: relative;
    display: flex;
    height: 72px;
}

.command_tools {
    width: 28px;
    display: flex;
    flex-direction: column;
    align-items: center;
    gap: 10px;
    padding-top: 5px;
    background: linear-gradient(#888, #444);
}

.command_tools svg {
    stroke: #e8e8e8;
    stroke-width: 2;
}

.command_tools button:first-of-type svg {
    width: 12px;
    height: 12px;
}

.dots {
    width: 22px;
    height: 8px;
    background: radial-gradient(#ccc 1px, transparent 1px) 0 0 / 4px 4px;
}

.command_body {
    flex: 1;
    display: flex;
    flex-direction: column;
}

.history {
    flex: 1;
    border: 1px solid #777;
    background: #c7c7c7;
}

.command_line {
    display: flex;
    align-items: center;
    height: 27px;
    padding-left: 6px;
    border-bottom: 1px solid #888;
    background: #fff;
}

.prompt {
    height: 18px;
    margin-right: 2px;
}

.command_line .caret {
    opacity: .6;
}

.command_line input {
    flex: 1;
    margin-left: 3px;
    padding: 3px 2px 0;
    border: 0;
    outline: 0;
    background: none;
    color: #111;
    font: 15px var(--mono);
}

.suggestions {
    position: absolute;
    left: 28px;
    bottom: 27px;
    width: 400px;
    margin: 0;
    padding: 0;
    border: 1px solid #000;
    list-style: none;
    background: #757575;
    color: #fff;
    font: 15px/20px var(--mono);
}

.suggestions li {
    display: flex;
    align-items: center;
    gap: 5px;
    height: 30px;
    padding: 0 4px;
}

.suggestions .selected {
    border-bottom: 1px solid #333;
    background: linear-gradient(#a3bfe6, #7288ab);
}

.suggestions .help {
    margin-left: auto;
    font-family: var(--ui);
}

.suggestions .help.web {
    margin-left: 0;
    border-color: #65716c;
    background: #dfe8e0;
}

.help.web svg {
    width: 16px;
    height: 16px;
}

.suggestions .sysvar {
    height: 29px;
    border-top: 1px solid #000;
    background: #4d4d4d;
    color: #1e1e1e;
    font-family: var(--ui);
    font-weight: 700;
}

.dim_icon {
    opacity: .5;
}

.highlight {
    position: absolute;
    left: 28px;
    bottom: 141px;
    width: 209px;
    height: 41px;
    border: 4px solid #f00;
    border-radius: 8px;
}

.tooltip {
    position: absolute;
    left: 298px;
    bottom: 25px;
    width: 230px;
    border: 1px solid #767676;
    background: #f0f0f6;
    color: #505050;
}

.tooltip p {
    margin: 0;
    padding: 9px 9px 10px;
}

.tooltip_more {
    display: flex;
    flex-direction: column;
    gap: 9px;
    margin: 0 2px;
    padding: 6px 7px 9px;
    border-top: 1px solid #b8b8b8;
}

.tooltip b {
    display: flex;
    align-items: center;
    gap: 5px;
    white-space: pre;
}

.tooltip b svg {
    height: 18px;
}

/* bottom */

.bottom_bar {
    display: flex;
    align-items: flex-start;
    height: 63px;
    background: linear-gradient(90deg, #4b5a1d 226px, #c9c9d0 226px) bottom / 100% 3px no-repeat, #b2b2b2;
}

.layout_tabs {
    display: flex;
    width: 435px;
    padding: 1px 0 0 10px;
}

.layout_tab {
    position: relative;
    width: 69px;
    height: 22px;
    color: #606060;
}

.layout_tab.model {
    width: 64px;
    color: #111;
    font-weight: 700;
}

.layout_tab svg {
    position: absolute;
    inset: 0;
    width: 100%;
    height: 100%;
    stroke: none;
}

.layout_tab span {
    position: relative;
}

.add_layout {
    width: 29px;
    height: 21px;
    margin-left: 2px;
    border-radius: 14px 4px 12px 4px;
}

.status_bar {
    flex: 1;
    align-self: flex-end;
    display: flex;
    align-items: center;
    height: 36px;
    margin-bottom: 2px;
    padding-left: 5px;
    background: #e8e8e8;
}

.status_bar > button {
    display: grid;
    place-items: center;
    width: 29px;
    height: 28px;
    margin-right: 1px;
    border: 1px solid transparent;
}

.status_bar svg {
    stroke-width: 1;
}

.status_bar .snap {
    stroke-width: 3;
}

.status_bar > .space {
    width: 32px;
    margin-right: 2px;
    color: #111;
    font-weight: 500;
}

.status_bar .on {
    border-color: #5a93c8;
    background: #cce4fb;
}

.status_bar .caret {
    margin: 0 7px 0 5px;
}

.gap {
    width: 2px;
    align-self: stretch;
    background: #f4f4f4;
}

/* site mark in the lower right corner */

.site_mark {
    position: absolute;
    right: 0;
    bottom: 0;
    width: 374px;
    height: 187px;
    display: flex;
    align-items: center;
    gap: 2px;
    padding-left: 33px;
    background: #fdfdfd;
    color: #0a0a0a;
    white-space: nowrap;
}

.site_mark svg {
    width: 100px;
    height: 80px;
    stroke: none;
}

.site_mark div {
    display: flex;
    flex-direction: column;
}

.site_mark strong {
    font: italic 900 40px/40px "Noto Sans CJK SC", sans-serif;
}

.site_mark em {
    font-size: 26px;
    font-weight: 500;
    line-height: 32px;
}
```
